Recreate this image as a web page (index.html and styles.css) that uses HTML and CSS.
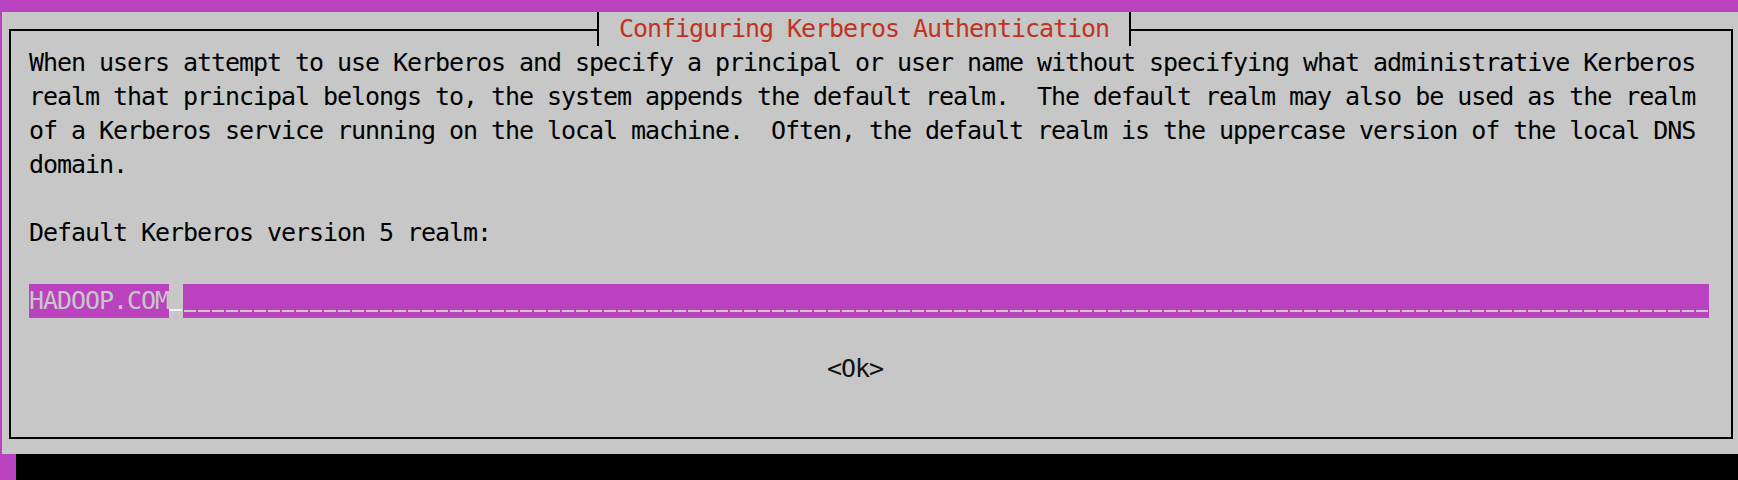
FILE: index.html
```html
<!DOCTYPE html>
<html lang="en">
<head>
<meta charset="utf-8">
<title>Configuring Kerberos Authentication</title>
<link rel="stylesheet" href="styles.css">
</head>
<body>
  <div class="topbar"></div>
  <div class="screen">
    <div class="edge"></div>
    <div class="window">
      <div class="titlerow">
        <div class="seg seg-left"></div>
        <div class="junction"></div>
        <div class="title">Configuring Kerberos Authentication</div>
        <div class="junction"></div>
        <div class="seg seg-right"></div>
      </div>
      <div class="box">
        <div class="line">When users attempt to use Kerberos and specify a principal or user name without specifying what administrative Kerberos</div>
        <div class="line">realm that principal belongs to, the system appends the default realm.  The default realm may also be used as the realm</div>
        <div class="line">of a Kerberos service running on the local machine.  Often, the default realm is the uppercase version of the local DNS</div>
        <div class="line">domain.</div>
        <div class="line"></div>
        <div class="line">Default Kerberos version 5 realm:</div>
        <div class="line"></div>
        <div class="line field">
          <span class="value">HADOOP.COM</span><span class="cursor"></span><span class="rest"></span>
        </div>
        <div class="line"></div>
        <div class="line buttons"><span class="btn">&lt;Ok&gt;</span></div>
        <div class="line"></div>
      </div>
    </div>
  </div>
  <div class="bottom">
    <div class="bottom-edge"></div>
    <div class="shadow"></div>
  </div>
</body>
</html>
```

FILE: styles.css
```css
html, body {
  margin: 0;
  padding: 0;
}
body {
  width: 1738px;
  height: 480px;
  overflow: hidden;
  background: #000;
  font-family: "DejaVu Sans Mono", "Liberation Mono", monospace;
  font-size: 25px;
  letter-spacing: -1.05px;
  color: #000;
}
.topbar {
  height: 12px;
  background: #bb42bf;
}
.screen {
  display: flex;
  height: 442px;
}
.edge {
  width: 2px;
  background: #bb42bf;
}
.window {
  flex: 1;
  background: #c7c7c7;
  padding: 0 5px 15px 7px;
  display: flex;
  flex-direction: column;
}
.titlerow {
  display: flex;
  height: 34px;
}
.seg {
  align-self: flex-end;
  height: 17px;
  box-sizing: border-box;
  border-top: 2px solid #000;
}
.seg-left {
  width: 588px;
  border-left: 2px solid #000;
}
.seg-right {
  flex: 1;
  border-right: 2px solid #000;
}
.junction {
  width: 2px;
  height: 34px;
  background: #000;
}
.title {
  padding: 0 20px;
  height: 34px;
  line-height: 34px;
  white-space: pre;
  color: #bf3320;
}
.box {
  border: 2px solid #000;
  border-top: none;
  padding: 0 0 17px 18px;
}
.line {
  height: 34px;
  line-height: 34px;
  white-space: pre;
}
.field {
  display: flex;
}
.value {
  width: 140px;
  background: #bb42bf;
  color: #c7c7c7;
}
.cursor {
  width: 14px;
  background: linear-gradient(#f2f2f2, #f2f2f2) 0 25px / 13px 2px no-repeat, #c7c7c7;
}
.rest {
  width: 1526px;
  background:
    repeating-linear-gradient(90deg, transparent 0 1px, #c7c7c7 1px 13px, transparent 13px 14px) 0 26px / 100% 2px no-repeat,
    #bb42bf;
}
.buttons {
  padding-left: 798px;
}
.btn {
  color: #111;
}
.bottom {
  display: flex;
  height: 26px;
}
.bottom-edge {
  width: 16px;
  background: #bb42bf;
}
.shadow {
  flex: 1;
  background: #000;
}
```
